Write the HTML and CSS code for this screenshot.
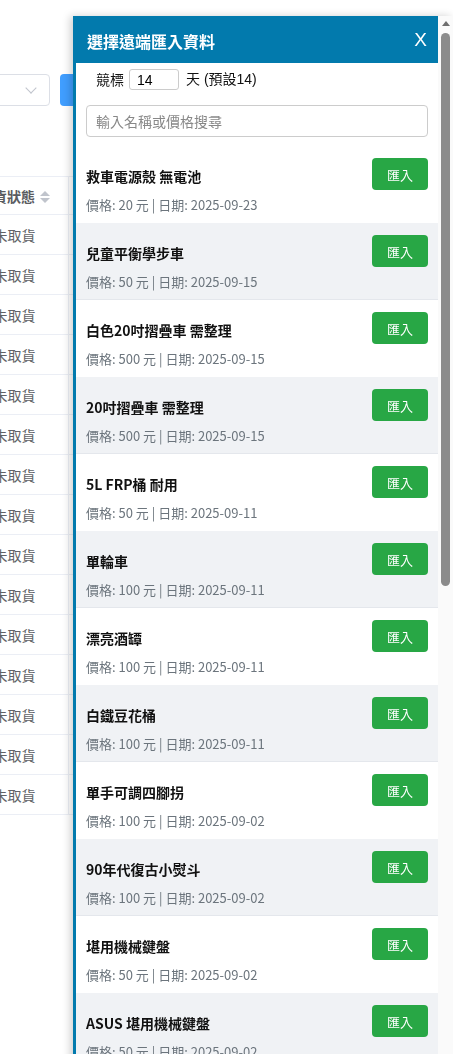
FILE: index.html
```html
<!DOCTYPE html>
<html lang="zh-Hant">
<head>
<meta charset="utf-8">
<title>選擇遠端匯入資料</title>
<link rel="stylesheet" href="styles.css">
</head>
<body>
<div class="page">
  <div class="toolbar">
    <div class="select"><span class="chev"></span></div>
    <button class="btn-primary">查詢</button>
  </div>
  <table class="grid">
    <thead>
      <tr><th class="c1">品名</th><th class="c2">取貨狀態<span class="sort"><i class="up"></i><i class="down"></i></span></th><th class="c3">操作</th></tr>
    </thead>
    <tbody>
      <tr><td class="c1"></td><td class="c2">未取貨</td><td class="c3"></td></tr>
      <tr><td class="c1"></td><td class="c2">未取貨</td><td class="c3"></td></tr>
      <tr><td class="c1"></td><td class="c2">未取貨</td><td class="c3"></td></tr>
      <tr><td class="c1"></td><td class="c2">未取貨</td><td class="c3"></td></tr>
      <tr><td class="c1"></td><td class="c2">未取貨</td><td class="c3"></td></tr>
      <tr><td class="c1"></td><td class="c2">未取貨</td><td class="c3"></td></tr>
      <tr><td class="c1"></td><td class="c2">未取貨</td><td class="c3"></td></tr>
      <tr><td class="c1"></td><td class="c2">未取貨</td><td class="c3"></td></tr>
      <tr><td class="c1"></td><td class="c2">未取貨</td><td class="c3"></td></tr>
      <tr><td class="c1"></td><td class="c2">未取貨</td><td class="c3"></td></tr>
      <tr><td class="c1"></td><td class="c2">未取貨</td><td class="c3"></td></tr>
      <tr><td class="c1"></td><td class="c2">未取貨</td><td class="c3"></td></tr>
      <tr><td class="c1"></td><td class="c2">未取貨</td><td class="c3"></td></tr>
      <tr><td class="c1"></td><td class="c2">未取貨</td><td class="c3"></td></tr>
      <tr><td class="c1"></td><td class="c2">未取貨</td><td class="c3"></td></tr>
    </tbody>
  </table>
</div>

<aside class="panel">
  <div class="panel-body">
    <div class="panel-head">
      <h2 class="panel-title">選擇遠端匯入資料</h2>
      <button class="close">X</button>
    </div>
    <div class="days">
      <span class="days-label">競標</span>
      <input class="days-input" type="text" value="14">
      <span class="days-note">天 (預設14)</span>
    </div>
    <div class="search">
      <input class="search-input" type="text" placeholder="輸入名稱或價格搜尋">
    </div>
    <ul class="list">
      <li class="item"><div class="row"><span class="name">救車電源殼 無電池</span><button class="import">匯入</button></div><div class="meta">價格: 20 元 | 日期: 2025-09-23</div></li>
      <li class="item"><div class="row"><span class="name">兒童平衡學步車</span><button class="import">匯入</button></div><div class="meta">價格: 50 元 | 日期: 2025-09-15</div></li>
      <li class="item"><div class="row"><span class="name">白色20吋摺疊車 需整理</span><button class="import">匯入</button></div><div class="meta">價格: 500 元 | 日期: 2025-09-15</div></li>
      <li class="item"><div class="row"><span class="name">20吋摺疊車 需整理</span><button class="import">匯入</button></div><div class="meta">價格: 500 元 | 日期: 2025-09-15</div></li>
      <li class="item"><div class="row"><span class="name">5L FRP桶 耐用</span><button class="import">匯入</button></div><div class="meta">價格: 50 元 | 日期: 2025-09-11</div></li>
      <li class="item"><div class="row"><span class="name">單輪車</span><button class="import">匯入</button></div><div class="meta">價格: 100 元 | 日期: 2025-09-11</div></li>
      <li class="item"><div class="row"><span class="name">漂亮酒罈</span><button class="import">匯入</button></div><div class="meta">價格: 100 元 | 日期: 2025-09-11</div></li>
      <li class="item"><div class="row"><span class="name">白鐵豆花桶</span><button class="import">匯入</button></div><div class="meta">價格: 100 元 | 日期: 2025-09-11</div></li>
      <li class="item"><div class="row"><span class="name">單手可調四腳拐</span><button class="import">匯入</button></div><div class="meta">價格: 100 元 | 日期: 2025-09-02</div></li>
      <li class="item"><div class="row"><span class="name">90年代復古小熨斗</span><button class="import">匯入</button></div><div class="meta">價格: 100 元 | 日期: 2025-09-02</div></li>
      <li class="item"><div class="row"><span class="name">堪用機械鍵盤</span><button class="import">匯入</button></div><div class="meta">價格: 50 元 | 日期: 2025-09-02</div></li>
      <li class="item"><div class="row"><span class="name">ASUS 堪用機械鍵盤</span><button class="import">匯入</button></div><div class="meta">價格: 50 元 | 日期: 2025-09-02</div></li>
      <li class="item"><div class="row"><span class="name">木製書架</span><button class="import">匯入</button></div><div class="meta">價格: 200 元 | 日期: 2025-08-28</div></li>
    </ul>
  </div>
  <div class="vscroll">
    <span class="vscroll-up"></span>
    <span class="vscroll-thumb"></span>
  </div>
</aside>
</body>
</html>
```

FILE: styles.css
```css
html, body {
  margin: 0;
  padding: 0;
  background: #fff;
  overflow: hidden;
}

body {
  font-family: "Noto Sans", "Noto Sans CJK TC", sans-serif;
  color: #606266;
}

.page {
  width: 720px;
  margin-left: -216px;
  padding-top: 74px;
}

.toolbar {
  display: flex;
  gap: 10px;
  height: 32px;
}

.select {
  position: relative;
  width: 264px;
  height: 30px;
  border: 1px solid #dcdfe6;
  border-radius: 4px;
  background: #fff;
}

.chev {
  position: absolute;
  right: 14px;
  top: 9px;
  width: 7px;
  height: 7px;
  border-right: 1px solid #c0c4cc;
  border-bottom: 1px solid #c0c4cc;
  transform: rotate(45deg);
}

.btn-primary {
  width: 90px;
  height: 32px;
  border: none;
  border-radius: 4px;
  background: #409eff;
  color: #fff;
  font: 14px "Noto Sans", "Noto Sans CJK TC", sans-serif;
}

.grid {
  margin-top: 70px;
  border-collapse: collapse;
  table-layout: fixed;
  width: 720px;
  font-size: 14px;
}

.grid th,
.grid td {
  border-top: 1px solid #ebeef5;
  border-bottom: 1px solid #ebeef5;
  border-right: 1px solid #ebeef5;
  padding: 0 10px;
  text-align: left;
  white-space: nowrap;
  overflow: hidden;
}

.grid th {
  height: 37px;
  font-weight: bold;
  color: #5a5c61;
}

.grid td {
  height: 39px;
  color: #606266;
}

.grid .c1 { width: 156px; }
.grid .c2 { width: 87px; text-align: center; }
.grid .c3 { width: auto; }

.sort {
  display: inline-flex;
  flex-direction: column;
  gap: 2px;
  vertical-align: middle;
  margin-left: 5px;
  position: relative;
  top: -1px;
}

.sort i {
  display: block;
  width: 0;
  height: 0;
  border-left: 5px solid transparent;
  border-right: 5px solid transparent;
}

.sort .up { border-bottom: 5px solid #c0c4cc; }
.sort .down { border-top: 5px solid #c0c4cc; }

/* Panel */
.panel {
  position: fixed;
  top: 16px;
  left: 73px;
  right: 0;
  height: 100vh;
  display: flex;
  background: #fff;
  border-left: 3px solid #027aad;
  box-shadow: -3px 0 8px rgba(0, 0, 0, 0.18);
  color: #212529;
  font-family: "Noto Sans CJK TC", "Noto Sans", sans-serif;
}

.panel-body {
  flex: 1;
  min-width: 0;
  overflow: hidden;
}

.vscroll {
  flex: 0 0 15px;
  display: flex;
  flex-direction: column;
  align-items: center;
  background: #fafafa;
  padding-top: 5px;
}

.vscroll-up {
  width: 0;
  height: 0;
  border-left: 4px solid transparent;
  border-right: 4px solid transparent;
  border-bottom: 5px solid #6e6e6e;
}

.vscroll-thumb {
  margin-top: 7px;
  width: 9px;
  height: 553px;
  border-radius: 5px;
  background: #8b8b8b;
}

.panel-head {
  display: flex;
  align-items: center;
  justify-content: space-between;
  height: 47px;
  background: #027aad;
  padding: 0 11px 0 11px;
}

.panel-title {
  margin: 3px 0 0;
  font-size: 16px;
  font-weight: bold;
  color: #fff;
}

.close {
  border: none;
  background: transparent;
  color: #fff;
  font: 19px "Liberation Sans", "Noto Sans", sans-serif;
  padding: 0;
}

.days {
  display: flex;
  align-items: center;
  height: 21px;
  margin: 6px 0 0;
  padding-left: 20px;
  font-size: 14px;
  line-height: 21px;
  color: #111;
}

.days-label {
  font-family: "Noto Sans CJK TC", sans-serif;
}

.days-input {
  box-sizing: border-box;
  width: 50px;
  height: 21px;
  margin: 0 7px 0 5px;
  padding: 0 7px;
  border: 1px solid #ccc;
  border-radius: 3px;
  font: 14px "Liberation Sans", sans-serif;
  color: #000;
}

.days-note {
  font-family: "Liberation Sans", "Noto Sans CJK TC", sans-serif;
}

.search {
  padding: 15px 10px 9px;
}

.search-input {
  box-sizing: border-box;
  display: block;
  width: 100%;
  height: 32px;
  padding: 0 9px;
  border: 1px solid #ccc;
  border-radius: 4px;
  font: 14px "Noto Sans CJK TC", "Noto Sans", sans-serif;
  color: #333;
}

.search-input::placeholder {
  color: #888;
}

.list {
  list-style: none;
  margin: 0;
  padding: 0;
}

.item {
  padding: 12px 10px 8px;
  height: 57px;
}

.item:nth-child(even) {
  background: #f0f2f5;
  border-bottom: 1px solid #e4e7ec;
  height: 56px;
}

.row {
  display: flex;
  align-items: center;
  justify-content: space-between;
  height: 32px;
}

.name {
  font-size: 14px;
  font-weight: bold;
  color: #111;
  line-height: 20px;
  padding-top: 4px;
}

.import {
  width: 56px;
  height: 32px;
  border: none;
  border-radius: 4px;
  background: #28a745;
  color: #fff;
  font: 13px "Noto Sans CJK TC", "Noto Sans", sans-serif;
}

.meta {
  margin-top: 5px;
  font-size: 13px;
  line-height: 20px;
  color: #6c757d;
}
```
